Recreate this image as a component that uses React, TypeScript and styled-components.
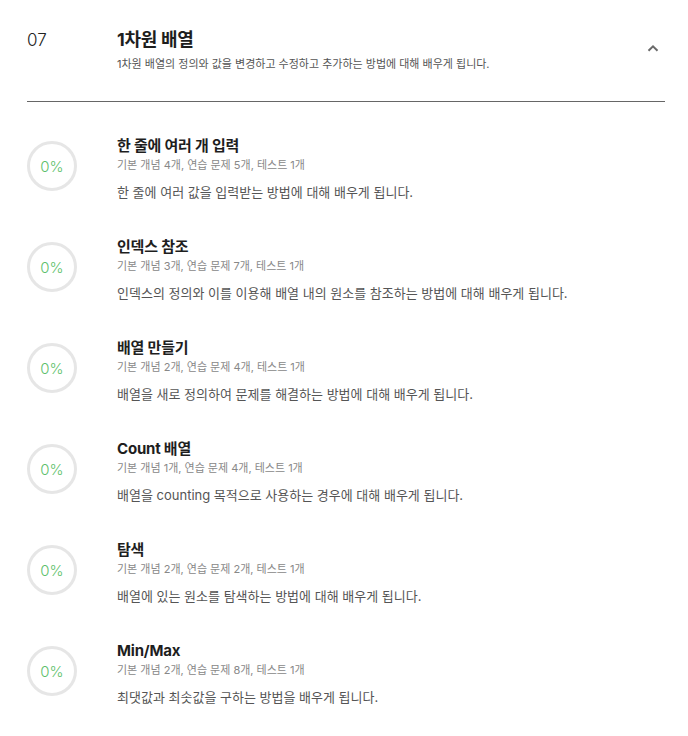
import React from "react";
import styled, { createGlobalStyle } from "styled-components";

interface Lesson {
  title: string;
  meta: string;
  desc: string;
  progress: number;
}

const lessons: Lesson[] = [
  {
    title: "한 줄에 여러 개 입력",
    meta: "기본 개념 4개, 연습 문제 5개, 테스트 1개",
    desc: "한 줄에 여러 값을 입력받는 방법에 대해 배우게 됩니다.",
    progress: 0,
  },
  {
    title: "인덱스 참조",
    meta: "기본 개념 3개, 연습 문제 7개, 테스트 1개",
    desc: "인덱스의 정의와 이를 이용해 배열 내의 원소를 참조하는 방법에 대해 배우게 됩니다.",
    progress: 0,
  },
  {
    title: "배열 만들기",
    meta: "기본 개념 2개, 연습 문제 4개, 테스트 1개",
    desc: "배열을 새로 정의하여 문제를 해결하는 방법에 대해 배우게 됩니다.",
    progress: 0,
  },
  {
    title: "Count 배열",
    meta: "기본 개념 1개, 연습 문제 4개, 테스트 1개",
    desc: "배열을 counting 목적으로 사용하는 경우에 대해 배우게 됩니다.",
    progress: 0,
  },
  {
    title: "탐색",
    meta: "기본 개념 2개, 연습 문제 2개, 테스트 1개",
    desc: "배열에 있는 원소를 탐색하는 방법에 대해 배우게 됩니다.",
    progress: 0,
  },
  {
    title: "Min/Max",
    meta: "기본 개념 2개, 연습 문제 8개, 테스트 1개",
    desc: "최댓값과 최솟값을 구하는 방법을 배우게 됩니다.",
    progress: 0,
  },
];

export default function App() {
  return (
    <>
      <GlobalStyle />
      <Section>
        <Header>
          <ChapterNo>07</ChapterNo>
          <HeaderText>
            <ChapterTitle>1차원 배열</ChapterTitle>
            <ChapterDesc>
              1차원 배열의 정의와 값을 변경하고 수정하고 추가하는 방법에 대해 배우게 됩니다.
            </ChapterDesc>
          </HeaderText>
          <Toggle aria-label="접기">
            <svg width="12" height="8" viewBox="0 0 12 8">
              <path
                d="M1.5 6.8 L6 2.3 L10.5 6.8"
                fill="none"
                stroke="#6a6a6a"
                strokeWidth="2"
              />
            </svg>
          </Toggle>
        </Header>

        <LessonList>
          {lessons.map((lesson) => (
            <LessonItem key={lesson.title}>
              <Progress>{lesson.progress}%</Progress>
              <LessonText>
                <LessonTitle>{lesson.title}</LessonTitle>
                <LessonMeta>{lesson.meta}</LessonMeta>
                <LessonDesc>{lesson.desc}</LessonDesc>
              </LessonText>
            </LessonItem>
          ))}
        </LessonList>
      </Section>
    </>
  );
}

const GlobalStyle = createGlobalStyle`
  body {
    margin: 0;
    background: #fff;
    font-family: "Inter", "Noto Sans CJK KR", sans-serif;
    color: #222;
  }
`;

const Section = styled.section`
  padding: 0 23px 0 27px;
`;

const Header = styled.div`
  display: flex;
  align-items: flex-start;
  padding: 28px 0 29px;
  border-bottom: 1px solid #666;
`;

const ChapterNo = styled.div`
  width: 90px;
  flex-shrink: 0;
  font-size: 17px;
  line-height: 24px;
  font-weight: 300;
  color: #222;
`;

const HeaderText = styled.div`
  flex: 1;
`;

const ChapterTitle = styled.h2`
  margin: 0;
  font-size: 18px;
  line-height: 24px;
  font-weight: 700;
  letter-spacing: -0.3px;
  color: #1e1e1e;
`;

const ChapterDesc = styled.p`
  margin: 4px 0 0;
  font-size: 11px;
  line-height: 16px;
  letter-spacing: 0;
  color: #555;
`;

const Toggle = styled.button`
  background: none;
  border: none;
  padding: 0;
  margin: 16px 6px 0 0;
  width: 12px;
  height: 8px;
  display: flex;
  cursor: pointer;
`;

const LessonList = styled.ul`
  list-style: none;
  margin: 0;
  padding: 34px 0 0;
  display: flex;
  flex-direction: column;
  gap: 35px;
`;

const LessonItem = styled.li`
  display: flex;
  align-items: flex-start;
  gap: 40px;
`;

const Progress = styled.div`
  width: 50px;
  height: 50px;
  margin-top: 5px;
  box-sizing: border-box;
  border: 3px solid #e6e6e6;
  border-radius: 50%;
  display: flex;
  align-items: center;
  justify-content: center;
  flex-shrink: 0;
  font-size: 15px;
  font-weight: 300;
  color: #5ebf6b;
`;

const LessonText = styled.div`
  display: flex;
  flex-direction: column;
`;

const LessonTitle = styled.h3`
  margin: 0;
  font-size: 15px;
  line-height: 20px;
  font-weight: 700;
  letter-spacing: -0.2px;
  color: #1e1e1e;
`;

const LessonMeta = styled.div`
  font-size: 11px;
  line-height: 18px;
  letter-spacing: 0;
  color: #888;
`;

const LessonDesc = styled.p`
  margin: 8px 0 0;
  font-size: 13px;
  line-height: 20px;
  letter-spacing: 0;
  color: #555;
`;
